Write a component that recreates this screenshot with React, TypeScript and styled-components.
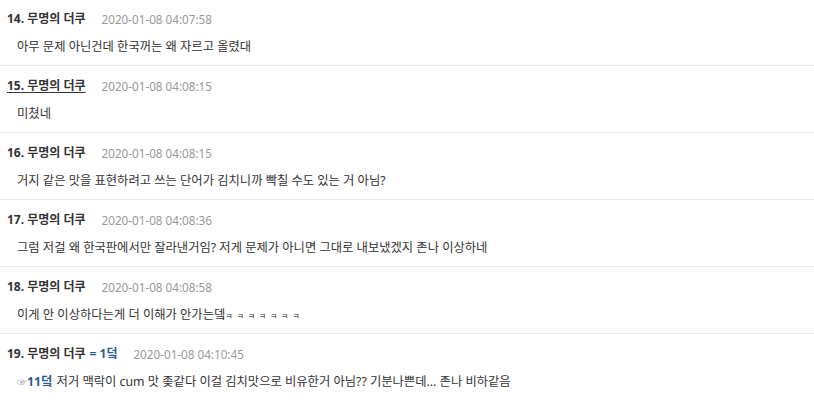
import React from "react";
import styled, { createGlobalStyle } from "styled-components";

const GlobalStyle = createGlobalStyle`
  body {
    margin: 0;
    background: #fff;
    font-family: "Noto Sans", "Noto Sans CJK KR", sans-serif;
    color: #333;
  }
`;

const List = styled.ul`
  list-style: none;
  margin: 0;
  padding: 0;
  margin-top: -1px;
`;

const Item = styled.li`
  height: 66px;
  border-bottom: 1px solid #ebebeb;
  box-sizing: content-box;
  display: flex;
  flex-direction: column;
`;

const Header = styled.div`
  display: flex;
  align-items: center;
  height: 16px;
  margin-top: 12px;
  padding-left: 7px;
  font-size: 12px;
  line-height: 16px;
`;

const Name = styled.span<{ $underline?: boolean }>`
  font-weight: 700;
  color: #333;
  text-decoration: ${(p) => (p.$underline ? "underline" : "none")};
  text-underline-offset: 2px;
`;

const Reply = styled.span`
  font-weight: 700;
  color: #2e5c8f;
  margin-left: 4px;
`;

const Stamp = styled.span`
  color: #999;
  margin-left: 16px;
  font-size: 11.7px;
`;

const Body = styled.div`
  margin-top: 12px;
  padding-left: 17px;
  font-size: 12.3px;
  line-height: 16px;
  color: #333;
  white-space: nowrap;
`;

const Laugh = styled.span`
  font-size: 8px;
  letter-spacing: 3.8px;
`;

const Pointer = styled.span`
  color: #999;
  font-size: 10px;
`;

const Ref = styled.span`
  color: #2e5c8f;
  font-weight: 700;
  margin-right: 1px;
`;

type Comment = {
  no: number;
  date: string;
  text: React.ReactNode;
  underline?: boolean;
  reply?: string;
};

const comments: Comment[] = [
  { no: 14, date: "2020-01-08 04:07:58", text: "아무 문제 아닌건데 한국꺼는 왜 자르고 올렸대" },
  { no: 15, date: "2020-01-08 04:08:15", text: "미쳤네", underline: true },
  {
    no: 16,
    date: "2020-01-08 04:08:15",
    text: "거지 같은 맛을 표현하려고 쓰는 단어가 김치니까 빡칠 수도 있는 거 아님?",
  },
  {
    no: 17,
    date: "2020-01-08 04:08:36",
    text: "그럼 저걸 왜 한국판에서만 잘라낸거임? 저게 문제가 아니면 그대로 내보냈겠지 존나 이상하네",
  },
  {
    no: 18,
    date: "2020-01-08 04:08:58",
    text: (
      <>
        이게 안 이상하다는게 더 이해가 안가는뎈<Laugh>ㅋㅋㅋㅋㅋㅋㅋ</Laugh>
      </>
    ),
  },
  {
    no: 19,
    date: "2020-01-08 04:10:45",
    reply: "1덬",
    text: (
      <>
        <Pointer>☞</Pointer>
        <Ref>11덬</Ref> 저거 맥락이 cum 맛 좆같다 이걸 김치맛으로 비유한거 아님?? 기분나쁜데... 존나 비하같음
      </>
    ),
  },
];

const App = () => {
  return (
    <>
      <GlobalStyle />
      <List>
        {comments.map((c) => (
          <Item key={c.no}>
            <Header>
              <Name $underline={c.underline}>{c.no}. 무명의 더쿠</Name>
              {c.reply && <Reply>= {c.reply}</Reply>}
              <Stamp>{c.date}</Stamp>
            </Header>
            <Body>{c.text}</Body>
          </Item>
        ))}
      </List>
    </>
  );
};

export default App;
